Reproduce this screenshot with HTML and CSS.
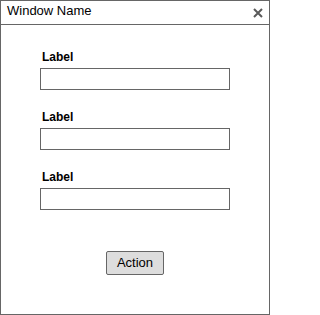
FILE: index.html
```html
<!DOCTYPE html>
<html>
<head>
<meta charset="utf-8">
<link rel="stylesheet" href="styles.css">
</head>
<body>
<div class="window">
  <div class="titlebar">
    <span class="title">Window Name</span>
    <svg class="close" width="10" height="10" viewBox="0 0 10 10"><path d="M1 1L9 9M9 1L1 9" stroke="#5a5a5a" stroke-width="2" fill="none"/></svg>
  </div>
  <div class="content">
    <div class="field">
      <div class="label">Label</div>
      <div class="input"></div>
    </div>
    <div class="field">
      <div class="label">Label</div>
      <div class="input"></div>
    </div>
    <div class="field">
      <div class="label">Label</div>
      <div class="input"></div>
    </div>
    <div class="actions">
      <div class="button">Action</div>
    </div>
  </div>
</div>
</body>
</html>
```
FILE: styles.css
```css
html, body {
  margin: 0;
  padding: 0;
  background: #fff;
}
.window {
  box-sizing: border-box;
  width: 270px;
  height: 315px;
  border: 1px solid #666;
  font-family: "Liberation Sans", Arial, sans-serif;
  color: #000;
  display: flex;
  flex-direction: column;
}
.titlebar {
  height: 23px;
  border-bottom: 1px solid #666;
  display: flex;
  align-items: flex-start;
  justify-content: space-between;
  padding: 0 6px 0 6px;
}
.title {
  font-size: 13px;
  line-height: 20px;
}
.close {
  margin-top: 7px;
  margin-right: 0;
}
.content {
  padding: 25px 39px 0 39px;
  display: flex;
  flex-direction: column;
  gap: 20px;
}
.field {
  display: flex;
  flex-direction: column;
  gap: 4px;
}
.label {
  font-size: 12px;
  font-weight: bold;
  line-height: 14px;
  padding-left: 2px;
}
.input {
  box-sizing: border-box;
  width: 190px;
  height: 22px;
  border: 1px solid #666;
  background: #fff;
}
.actions {
  display: flex;
  justify-content: center;
  padding-top: 21px;
}
.button {
  box-sizing: border-box;
  width: 58px;
  height: 24px;
  border: 1px solid #666;
  border-radius: 2px;
  background: #ddd;
  font-size: 13px;
  line-height: 22px;
  text-align: center;
}
```
